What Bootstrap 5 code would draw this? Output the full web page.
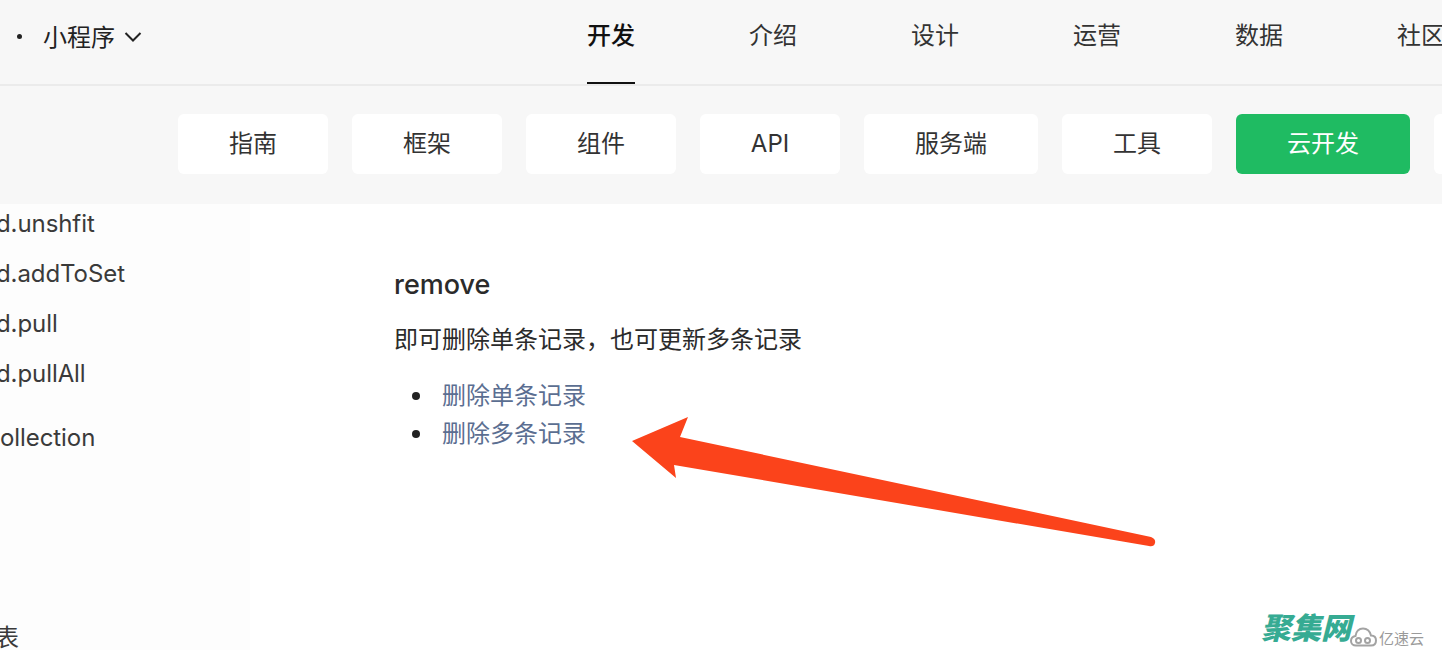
<!DOCTYPE html>
<html lang="zh-CN">
<head>
<meta charset="utf-8">
<title>云开发</title>
<link href="https://cdn.jsdelivr.net/npm/bootstrap@5.3.0/dist/css/bootstrap.min.css" rel="stylesheet">
<style>
html,body{height:650px;overflow:hidden}
body{width:1442px;position:relative;background:#fff;color:#2b2b2b;font-family:Inter,"Noto Sans CJK SC",sans-serif;font-size:24px;line-height:1.5}
.topbar{height:86px;background:#f7f7f7;border-bottom:2px solid #ebebeb}
.brand-wrap{height:76px;width:143px;flex:none}
.brand-dot{width:5px;height:5px;border-radius:50%;background:#222;margin-left:17px;margin-top:-4px;flex:none}
.brand-name{margin-left:21px;font-size:24px;color:#222;white-space:nowrap;flex:none}
.brand-caret{margin-left:9px;margin-top:-2px;flex:none}
.main-nav{margin-left:444px;gap:114px;flex-wrap:nowrap}
.main-nav a{display:block;height:84px;line-height:72px;width:48px;white-space:nowrap;color:#333;text-decoration:none;flex:none}
.main-nav a.on{color:#111;font-weight:500;border-bottom:2px solid #111}
.subbar{height:118px;background:#f7f7f7;padding-left:178px;padding-top:28px;gap:24px}
.sub-tab{flex:none;width:150px;height:60px;padding:0;display:flex;align-items:center;justify-content:center;background:#fff;border:0;border-radius:6px;color:#333;font-size:24px}
.sub-tab.w-api{width:140px}
.sub-tab.w-svc{width:174px}
.sub-tab.w-cloud{width:174px;background:#1fbb62;color:#fff}
.page-body{height:446px}
.side-col{width:250px;background:#fdfdfd;flex:none;overflow:hidden;position:relative}
.side-list{padding:0;margin:-5px 0 0 0}
.side-list li{height:50px;line-height:50px;white-space:nowrap;margin-left:-4px;letter-spacing:-.08px;color:#3a3a3a}
.side-list li.gap-top{margin-top:14px;margin-left:0}
.side-list li.gap-big{margin-top:150px;margin-left:-5px}
.doc{padding:61px 0 0 144px}
.doc h3{font-size:27px;font-weight:500;line-height:40px;margin:0 0 15px;color:#2b2b2b}
.doc p{margin:0 0 17px;font-size:24px;line-height:40px;color:#2b2b2b}
.doc ul{margin:0;padding-left:48px;list-style:none}
.doc li{line-height:38px;height:38px;position:relative}
.doc li::before{content:"";position:absolute;left:-30px;top:15px;width:8px;height:8px;border-radius:50%;background:#222}
.doc a{color:#5b6e91;text-decoration:none}
.arrow-over{position:absolute;left:620px;top:405px}
.mark-over{position:absolute;left:1261px;top:610px;display:flex;align-items:flex-end;white-space:nowrap}
.mark-main{font-size:30px;line-height:36px;font-weight:900;font-style:italic;color:#36ab93;letter-spacing:0}
.mark-icon{margin-left:-1px;margin-bottom:-1px;flex:none}
.mark-sub{font-size:15px;line-height:20px;color:#9a9a9a;margin-left:2px;margin-bottom:-3px}
</style>
</head>
<body>
<header class="topbar d-flex align-items-start">
  <div class="brand-wrap d-flex align-items-center">
    <span class="brand-dot"></span>
    <span class="brand-name">小程序</span>
    <svg class="brand-caret" width="18" height="12" viewBox="0 0 18 12"><path d="M1.500 2 9 9.500 16.500 2" fill="none" stroke="#222" stroke-width="2"/></svg>
  </div>
  <nav class="nav main-nav">
    <a class="on" href="#">开发</a><a href="#">介绍</a><a href="#">设计</a><a href="#">运营</a><a href="#">数据</a><a href="#">社区</a>
  </nav>
</header>
<div class="subbar d-flex align-items-start">
  <button class="btn sub-tab">指南</button>
  <button class="btn sub-tab">框架</button>
  <button class="btn sub-tab">组件</button>
  <button class="btn sub-tab w-api">API</button>
  <button class="btn sub-tab w-svc">服务端</button>
  <button class="btn sub-tab">工具</button>
  <button class="btn sub-tab w-cloud">云开发</button>
  <button class="btn sub-tab"></button>
</div>
<div class="page-body d-flex">
  <aside class="side-col">
    <ul class="list-unstyled side-list">
      <li>d.unshfit</li>
      <li>d.addToSet</li>
      <li>d.pull</li>
      <li>d.pullAll</li>
      <li class="gap-top">ollection</li>
      <li class="gap-big">表</li>
    </ul>
  </aside>
  <main class="doc flex-grow-1">
    <h3>remove</h3>
    <p>即可删除单条记录，也可更新多条记录</p>
    <ul>
      <li><a href="#">删除单条记录</a></li>
      <li><a href="#">删除多条记录</a></li>
    </ul>
  </main>
</div>
<svg class="arrow-over" width="550" height="150" viewBox="620 405 550 150"><path d="M632 441 688 417 680 437 1151 537Q1156 539 1155 543 1154 547 1149 546L674 465 676 478Z" fill="#fb431b"/></svg>
<div class="mark-over">
  <span class="mark-main">聚集网</span>
  <svg class="mark-icon" width="27" height="20" viewBox="0 0 27 20"><g fill="none" stroke="#a3a3a3" stroke-width="2"><path d="M6 18.500H21C24 18.500 26 16.500 26 13.500 26 10.500 24 8.500 21 8.500 20 4.500 17 1.500 13 1.500 9 1.500 6 4.500 5.500 9 3 9.500 1 11 1 14 1 16.500 3 18.500 6 18.500Z"/><circle cx="8.500" cy="13.500" r="2.500"/><circle cx="17.500" cy="13.500" r="2.500"/></g></svg>
  <span class="mark-sub">亿速云</span>
</div>
</body>
</html>
